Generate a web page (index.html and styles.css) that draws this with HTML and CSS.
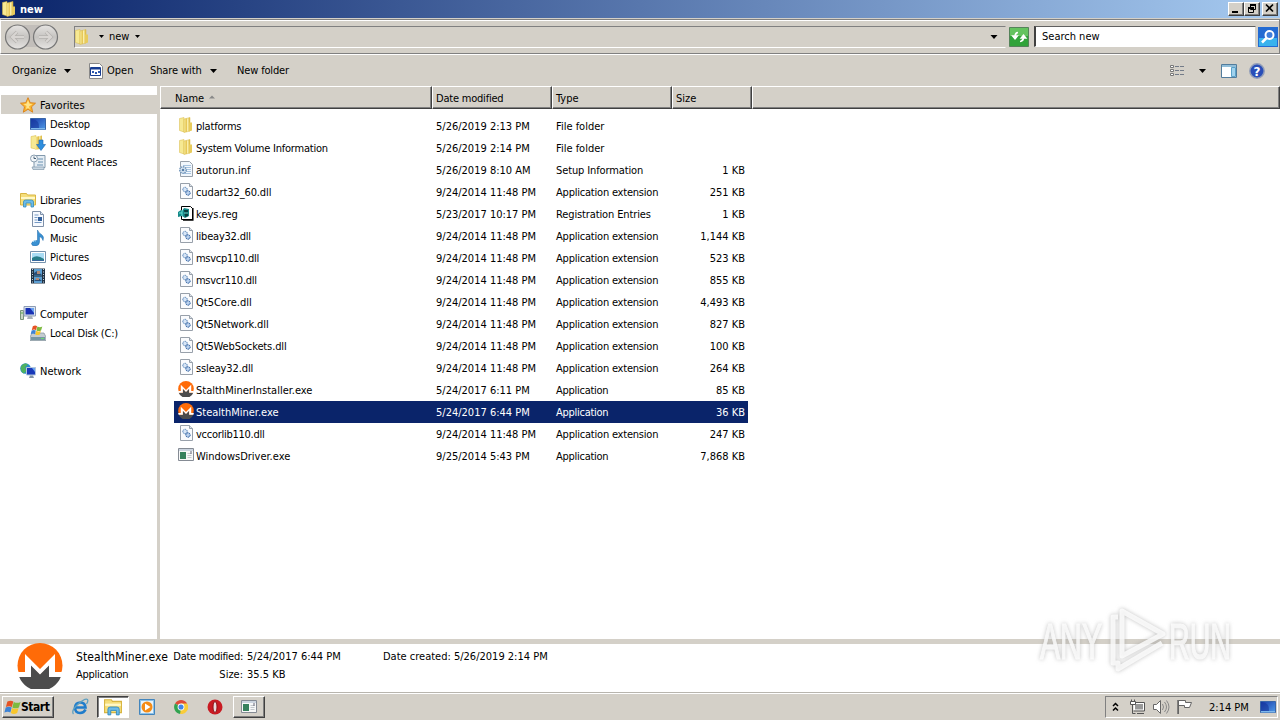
FILE: index.html
```html
<!DOCTYPE html>
<html lang="en">
<head>
<meta charset="utf-8">
<title>new</title>
<link rel="stylesheet" href="styles.css">
</head>
<body>
<svg class="defs" width="0" height="0">
<defs>
<linearGradient id="gold" x1="0" x2="1"><stop offset="0" stop-color="#f9eea0"/><stop offset=".5" stop-color="#e3c04a"/><stop offset=".55" stop-color="#fbf3b4"/><stop offset="1" stop-color="#dcb63c"/></linearGradient>
<linearGradient id="blue" x1="0" y1="0" x2="1" y2="1"><stop offset="0" stop-color="#1838a8"/><stop offset="1" stop-color="#4f9be8"/></linearGradient>
<linearGradient id="silver" x1="0" y1="0" x2="0" y2="1"><stop offset="0" stop-color="#e6e4e2"/><stop offset=".5" stop-color="#c6c4c1"/><stop offset="1" stop-color="#e6e4e2"/></linearGradient>
<symbol id="folder" viewBox="0 0 16 16"><path d="M1.500 1.500 6 .5V15l-4.500-1.500z" fill="#f6e993" stroke="#d9b844" stroke-width=".5"/><path d="M6 2l6-1.500V14l-6 1.500z" fill="url(#gold)" stroke="#d9b844" stroke-width=".5"/><path d="M11 5.500h3v8l-3 1z" fill="#e8cb5c"/></symbol>
<symbol id="dll" viewBox="0 0 16 16"><path d="M2.500.5h9l3 3v12h-12z" fill="#fafbfd" stroke="#98a0aa"/><path d="M11.500.5v3h3" fill="#dde3ea" stroke="#98a0aa"/><circle cx="7" cy="6.500" r="2.200" fill="#d7e5f6" stroke="#4677b0" stroke-dasharray="1.200 .6"/><circle cx="10" cy="10" r="2.200" fill="#b9d0ed" stroke="#23569a" stroke-dasharray="1.500 .5"/></symbol>
<symbol id="inf" viewBox="0 0 16 16"><path d="M2.500.5h9l3 3v12h-12z" fill="#f2f7fc" stroke="#98a0aa"/><path d="M5 4.500h8M6 6.500h7M8 8.500h5M8 10.500h5M5 12.500h8" stroke="#a8c4e0"/><circle cx="5" cy="9" r="3.200" fill="#dce8f4" stroke="#6e93b9" stroke-width="1.500" stroke-dasharray="1.400 .7"/><circle cx="5" cy="9" r="1.300" fill="#597fa8"/></symbol>
<symbol id="reg" viewBox="0 0 16 16"><path d="M3.500 1.500h9l2 2v11h-11z" fill="#fff" stroke="#000"/><path d="M14.800 3v12H5" fill="none" stroke="#000" stroke-width="1.500"/><path d="M0 7l3-2 1 1 2-3 5 1v7l-4 2-3-2-4 1z" fill="#168989"/><path d="M6 5l4 0v6l-3 1z" fill="#063c3e"/><path d="M1 8h3M6 8h4M4 5v6" stroke="#66dfd4"/></symbol>
<symbol id="monero" viewBox="0 0 46 46"><circle cx="23" cy="22.500" r="22.500" fill="#ff6b08"/><path d="M2 33.500h12V22l9 9 9-9v11.500h12A22.500 22.500 0 0 1 2 33.500z" fill="#4c4c4c"/><path d="M1.500 34h12.500V22.500L23 31.500l9-9V34h12.500l1-5H38V11L23 26 8 11v18H.5z" fill="#fff"/></symbol>
<symbol id="app" viewBox="0 0 16 16"><path d="M.5 1.500h15v12H.5z" fill="#f7f8f8" stroke="#858b94"/><path d="M1 2h14v2H1z" fill="#cbd4df"/><path d="M2 5h6v7H2z" fill="#36815d"/><path d="M9.500 6.500h4M9.500 8.500h4M9.500 10.500h4" stroke="#c3c8cc"/><path d="M13 4v3" stroke="#667"/></symbol>
<symbol id="star" viewBox="0 0 16 16"><path d="M8 .7l2.200 5 5.300.5-4 3.600 1.200 5.400L8 12.300l-4.700 2.900 1.200-5.400-4-3.600 5.300-.5z" fill="#fbb62f" stroke="#d97f16" stroke-width=".9"/><path d="M8 3l1.500 3.700 3 .3-3.500 2.500 1 3L8 11l-2 1 .5-3-3-2 3-.3z" fill="#ffe38a"/></symbol>
<symbol id="desk" viewBox="0 0 16 16"><path d="M.5 2.500h15v11H.5z" fill="url(#blue)" stroke="#3865a8"/><path d="M1 12h14v1.500H1z" fill="#7eb8ec"/><path d="M2 3q8 1 7 9H1V3z" fill="#16359b" opacity=".6"/></symbol>
<symbol id="down" viewBox="0 0 16 16"><path d="M1 1.500 6 .5V14l-5-1z" fill="#f6e993" stroke="#d9b844" stroke-width=".5"/><path d="M5 2l7-1.500v13l-7 1.500z" fill="url(#gold)"/><path d="M9 5h4v4.500h2.500L11 15.500 6.500 9.500H9z" fill="#2e8ede" stroke="#1b67af" stroke-width=".6"/></symbol>
<symbol id="recent" viewBox="0 0 16 16"><path d="M4 1.500h11v12H4z" fill="#e5edf4" stroke="#8299ac"/><path d="M2 13h12v2.500H3z" fill="#c9d7e2" stroke="#8299ac" stroke-width=".7"/><path d="M8 5h5M8 8h5M7 11h6" stroke="#6990b0"/><circle cx="4" cy="4.500" r="3.500" fill="#f3f7fa" stroke="#8ca0b1"/><path d="M4 2.500v2h2" fill="none" stroke="#445d73"/></symbol>
<symbol id="lib" viewBox="0 0 16 16"><path d="M.5 1.500h6l1 1.500h8v10H.5z" fill="#f5de7b" stroke="#d8b542"/><path d="M1 5h14v2H1z" fill="#fff8c7"/><path d="M3.500 15v-5q0-2 2-2h6q2 0 2 2v5h-2.500v-4h-5v4z" fill="#6cbbe8" stroke="#328abd" stroke-width=".8"/></symbol>
<symbol id="doc" viewBox="0 0 16 16"><path d="M2.500.5h8l3 3v12h-11z" fill="#f7faff" stroke="#7f90a8"/><path d="M10.500.5v3h3" fill="#dce8f5" stroke="#7f90a8"/><path d="M4.500 4h4M4.500 6.500h3M4.500 9h3M4.500 11.500h7" stroke="#769ac5"/><path d="M8 6h4v4H8z" fill="#315f9c"/></symbol>
<symbol id="music" viewBox="0 0 16 16"><path d="M7.500 0q1 3 4 4.500 3 2 1.500 6-.5-3-3.500-4v5.500q0 3.500-4 4-4 0-4-2.500 1-3.500 6-3z" fill="#3a91d2" stroke="#1b67aa" stroke-width=".5"/><path d="M3 12q1-2 3-1" stroke="#a6dcf7" fill="none"/></symbol>
<symbol id="pic" viewBox="0 0 16 16"><path d="M.5 2.500h15v11H.5z" fill="#fff" stroke="#7692ad"/><path d="M2 4h12v8H2z" fill="#a9dcf4"/><path d="M2 9q5-4 12 1v2H2z" fill="#287e8a"/><path d="M2 11h12v1H2z" fill="#38689e"/></symbol>
<symbol id="vid" viewBox="0 0 16 16"><path d="M1 .5h14v15H1z" fill="#213244"/><path d="M4 1h8v14H4z" fill="#5c9ed1"/><path d="M4 5l3-2 5 4H4zM4 13l4-3 4 3z" fill="#294d77"/><path d="M7 3h3v3H7zM6 10h3v2H6z" fill="#b08a78"/><path d="M4 8h8" stroke="#182c3e"/><path d="M2.500 1v14M13.500 1v14" stroke="#c9d7e2" stroke-dasharray="1 1.500"/></symbol>
<symbol id="comp" viewBox="0 0 16 16"><path d="M.5 4.500h3v9h-3z" fill="#cad7c7" stroke="#78947b"/><path d="M1 7h2" stroke="#57b04a"/><path d="M4 .5h11.500V10H4z" fill="#dce5f1" stroke="#8c9bb3"/><path d="M5.500 2h8.500v6.500H5.500z" fill="#1730b4"/><path d="M10 2h4v5z" fill="#6ba1ef"/><path d="M8 10h4l1 3H7z" fill="#a7b0bb"/></symbol>
<symbol id="flag4" viewBox="0 0 20 18"><path d="M4 2q4-2 7 0L9.200 8.500q-3-2-7 0z" fill="#e55324"/><path d="M11.500 2.500q4 2 8 0L17.500 9q-4 2-7.700 0z" fill="#7dba3f"/><path d="M2 9q4-2 7 0L7.500 15q-3-2-7 0z" fill="#3d83d5"/><path d="M9.600 9.500q4 2 7.500 0L15.500 15.500q-4 2-7.500 0z" fill="#f8c62c"/></symbol>
<symbol id="disk" viewBox="0 0 16 16"><path d="M2 8h12l2 4v3.500H0V12z" fill="#c4ccd1" stroke="#7f919b" stroke-width=".7"/><path d="M1 12h14v3H1z" fill="#7796a3"/><path d="M11 13.500h3" stroke="#69dc71"/><use href="#flag4" x="0" y="0" width="13" height="11"/></symbol>
<symbol id="net" viewBox="0 0 16 16"><circle cx="5.500" cy="5.500" r="5.300" fill="#278acc"/><path d="M1 3.500q3-5 7-2L5 4.500l2 3-3 3Q0 8.500 1 3.500z" fill="#4eb260"/><path d="M6.500 4.500h9v7.500h-9z" fill="#1939b9" stroke="#b3c6dd"/><path d="M12 5h3v4z" fill="#6ba5f0"/><path d="M10 12.500h3l1 2.500H9z" fill="#8495a7"/></symbol>
<symbol id="chev" viewBox="0 0 7 4"><path d="M0 0h7L3.500 4z"/></symbol>
</defs>
</svg>

<div class="window">
<header class="titlebar">
<svg class="i16"><use href="#folder"/></svg><b class="title">new</b>
<div class="caption-buttons">
<span class="cap"><svg width="12" height="10"><path d="M2 8h6v2H2z"/></svg></span>
<span class="cap"><svg width="12" height="11"><path d="M4.500 2.500h5v4h-5zM2.500 5.500h5v4h-5z" fill="#d4d0c8" stroke="#000"/><path d="M4 1h6v2H4zM2 4h6v2H2z"/></svg></span>
<span class="cap close"><svg width="12" height="10"><path d="M2 1.500l7 7M9 1.500l-7 7" stroke="#000" stroke-width="1.700"/></svg></span>
</div>
</header>

<nav class="navbar">
<svg class="arrows" width="60" height="30" viewBox="0 0 60 30"><path d="M10 3h38v22H10z" fill="#c2beba"/><circle cx="14.500" cy="15" r="12" fill="url(#silver)" stroke="#777" stroke-width="1.200"/><circle cx="42.500" cy="15" r="12" fill="url(#silver)" stroke="#777" stroke-width="1.200"/><path d="M21 15H9m5-5-5 5 5 5M36 15h12m-5-5 5 5-5 5" stroke="#b4b1ae" stroke-width="3.500" fill="none"/><path d="M21 15H9m5-5-5 5 5 5M36 15h12m-5-5 5 5-5 5" stroke="#d8d5d2" stroke-width="2.200" fill="none"/></svg>
<div class="address"><svg class="i16"><use href="#folder"/></svg><svg class="ch5"><use href="#chev"/></svg><span class="crumb">new</span><svg class="ch5"><use href="#chev"/></svg><svg class="ch8 push"><use href="#chev"/></svg></div>
<svg class="go" width="20" height="20"><path d="M.5.500h19v19H.500z" fill="#31a33a" stroke="#55835a"/><path d="M1 1h18v8H1z" fill="#64c35f"/><path d="M9 5.500q-3 0-3 4M3.500 9h5L6 12zM11 14.500q3.500 0 3.500-4M12 11h5l-2.500-3z" fill="#fff" stroke="#fff" stroke-width="1.300"/></svg>
<div class="search">Search new</div>
<svg class="find" width="20" height="20"><path d="M0 0h20v20H0z" fill="#236bd2"/><path d="M1 11h18v8H1z" fill="#39b2ed"/><circle cx="11.500" cy="8" r="4" fill="#3f7edb" stroke="#fff" stroke-width="2"/><path d="M8.500 11 4 15.500" stroke="#fff" stroke-width="2.500"/></svg>
</nav>

<div class="toolbar">
<span class="organize">Organize</span><svg class="ch7 g1"><use href="#chev"/></svg>
<svg class="i16 openico" viewBox="0 0 16 16"><path d="M1.500.5h10l3 3v12h-13z" fill="#fff" stroke="#888"/><path d="M2.500 4.500h10v8h-10z" fill="#fff" stroke="#173d92"/><path d="M3 5h9v1.500H3z" fill="#173d92"/><path d="M4 8h2v2H4zM7 9h2v2H7zM10 8h2v2h-2z" fill="#2d58b0"/></svg><span class="open">Open</span>
<span class="share">Share with</span><svg class="ch7 g2"><use href="#chev"/></svg><span class="newf">New folder</span>
<svg class="views" width="16" height="14"><path d="M.5 1.500h3v2h-3zM.5 5.500h3v2h-3zM.5 9.500h3v2h-3z" fill="#fff" stroke="#777"/><path d="M5 2.500h10M5 6.500h10M5 10.500h10" stroke="#737b88" stroke-dasharray="4 1"/></svg>
<svg class="ch7 g3"><use href="#chev"/></svg>
<svg class="pane" width="16" height="14"><path d="M.5.500h15v13H.500z" fill="#fff" stroke="#527c9c"/><path d="M1 1h14v2H1z" fill="#91bed9"/><path d="M10.500 3.500h4v9h-4z" fill="#a0d2ee" stroke="#5aa1c8"/></svg>
<svg class="help" width="16" height="16"><circle cx="8" cy="8" r="7.200" fill="#294eb8" stroke="#929eb9" stroke-width="1.500"/><text x="8" y="12.500" text-anchor="middle" class="qmark">?</text></svg>
</div>

<main class="body">
<aside class="sidebar">
<div class="node root selected"><svg class="i16"><use href="#star"/></svg><span>Favorites</span></div>
<div class="node"><svg class="i16"><use href="#desk"/></svg><span class="t1">Desktop</span></div>
<div class="node"><svg class="i16"><use href="#down"/></svg><span class="t2">Downloads</span></div>
<div class="node"><svg class="i16"><use href="#recent"/></svg><span class="t1">Recent Places</span></div>
<div class="node root gap"><svg class="i16"><use href="#lib"/></svg><span class="t2">Libraries</span></div>
<div class="node"><svg class="i16"><use href="#doc"/></svg><span class="t2">Documents</span></div>
<div class="node"><svg class="i16"><use href="#music"/></svg><span class="t2">Music</span></div>
<div class="node"><svg class="i16"><use href="#pic"/></svg><span>Pictures</span></div>
<div class="node"><svg class="i16"><use href="#vid"/></svg><span class="t2">Videos</span></div>
<div class="node root gap"><svg class="i16"><use href="#comp"/></svg><span class="t2">Computer</span></div>
<div class="node"><svg class="i16"><use href="#disk"/></svg><span class="t2">Local Disk (C:)</span></div>
<div class="node root gap"><svg class="i16"><use href="#net"/></svg><span>Network</span></div>
</aside>
<section class="files">
<div class="columns"><div class="col first">Name<svg class="sort" width="6" height="4"><path d="M0 3.500h6L3 .5z" fill="#888"/></svg></div><div class="col"><span class="t2">Date modified</span></div><div class="col">Type</div><div class="col">Size</div><div class="col"></div></div>
<div class="rows">
<div class="row"><svg class="i16"><use href="#folder"/></svg><span class="t2">platforms</span><span>5/26/2019 2:13 PM</span><span>File folder</span><span></span></div>
<div class="row"><svg class="i16"><use href="#folder"/></svg><span class="t2">System Volume Information</span><span>5/26/2019 2:14 PM</span><span>File folder</span><span></span></div>
<div class="row"><svg class="i16"><use href="#inf"/></svg><span>autorun.inf</span><span>5/26/2019 8:10 AM</span><span class="t1">Setup Information</span><span>1 KB</span></div>
<div class="row"><svg class="i16"><use href="#dll"/></svg><span class="t1">cudart32_60.dll</span><span>9/24/2014 11:48 PM</span><span class="t2">Application extension</span><span>251 KB</span></div>
<div class="row"><svg class="i16"><use href="#reg"/></svg><span>keys.reg</span><span>5/23/2017 10:17 PM</span><span class="t1">Registration Entries</span><span>1 KB</span></div>
<div class="row"><svg class="i16"><use href="#dll"/></svg><span class="t2">libeay32.dll</span><span>9/24/2014 11:48 PM</span><span class="t2">Application extension</span><span>1,144 KB</span></div>
<div class="row"><svg class="i16"><use href="#dll"/></svg><span class="t3">msvcp110.dll</span><span>9/24/2014 11:48 PM</span><span class="t2">Application extension</span><span>523 KB</span></div>
<div class="row"><svg class="i16"><use href="#dll"/></svg><span class="t3">msvcr110.dll</span><span>9/24/2014 11:48 PM</span><span class="t2">Application extension</span><span>855 KB</span></div>
<div class="row"><svg class="i16"><use href="#dll"/></svg><span>Qt5Core.dll</span><span>9/24/2014 11:48 PM</span><span class="t2">Application extension</span><span>4,493 KB</span></div>
<div class="row"><svg class="i16"><use href="#dll"/></svg><span class="t1">Qt5Network.dll</span><span>9/24/2014 11:48 PM</span><span class="t2">Application extension</span><span>827 KB</span></div>
<div class="row"><svg class="i16"><use href="#dll"/></svg><span class="t1">Qt5WebSockets.dll</span><span>9/24/2014 11:48 PM</span><span class="t2">Application extension</span><span>100 KB</span></div>
<div class="row"><svg class="i16"><use href="#dll"/></svg><span class="t1">ssleay32.dll</span><span>9/24/2014 11:48 PM</span><span class="t2">Application extension</span><span>264 KB</span></div>
<div class="row"><svg class="i16"><use href="#monero"/></svg><span>StalthMinerInstaller.exe</span><span>5/24/2017 6:11 PM</span><span class="t3">Application</span><span>85 KB</span></div>
<div class="row selected-row"><svg class="i16"><use href="#monero"/></svg><span>StealthMiner.exe</span><span>5/24/2017 6:44 PM</span><span class="t3">Application</span><span>36 KB</span></div>
<div class="row"><svg class="i16"><use href="#dll"/></svg><span class="t3">vccorlib110.dll</span><span>9/24/2014 11:48 PM</span><span class="t2">Application extension</span><span>247 KB</span></div>
<div class="row"><svg class="i16"><use href="#app"/></svg><span>WindowsDriver.exe</span><span>9/25/2014 5:43 PM</span><span class="t3">Application</span><span>7,868 KB</span></div>
</div>
</section>
</main>

<footer class="details">
<svg class="bigicon"><use href="#monero"/></svg>
<div class="dname"><span class="dtitle">StealthMiner.exe</span><span class="t3">Application</span></div>
<div class="dlabels"><span class="t3">Date modified:</span><span>Size:</span></div>
<div class="dvalues"><span>5/24/2017 6:44 PM</span><span>35.5 KB</span></div>
<div class="dcreated"><span>Date created: 5/26/2019 2:14 PM</span></div>
</footer>

<div class="taskbar">
<div class="start"><svg width="17" height="17"><use href="#flag4"/></svg><b>Start</b></div>
<div class="quick ie"><svg width="18" height="18" viewBox="0 0 18 18"><path d="M14.500 11.500Q13 15 9 15q-5 0-5-5.500Q4.500 4.500 9.500 4.500q4.500 0 5 5H4.500" fill="none" stroke="#1f7ccb" stroke-width="2.600"/><path d="M2.500 16Q0 13 6 7q8-7 10.500-5.500Q17.500 3 15.500 6" fill="none" stroke="#5d9fc0" stroke-width="1.300"/></svg></div>
<div class="task active"><svg width="18" height="18"><use href="#lib"/></svg></div>
<div class="quick wmp"><svg width="16" height="16"><path d="M.5.500h15v15H.500z" fill="#8dc2e9" stroke="#4385bc"/><path d="M2 2h12v12H2z" fill="#e9f4fb"/><circle cx="8" cy="8" r="5.500" fill="#f58c16"/><path d="M6 4.500v7L11.500 8z" fill="#fff"/></svg></div>
<div class="quick chrome"><svg width="14" height="14" viewBox="0 0 16 16"><path d="M8 8 1.200 4A8 8 0 0 1 15 4z" fill="#df4a38"/><path d="M8 8 1.200 4A8 8 0 0 0 7 16l4-6z" fill="#32a350"/><path d="M8 8l-1 8A8 8 0 0 0 15 4H8z" fill="#f9cc39"/><circle cx="8" cy="8" r="3.900" fill="#fff"/><circle cx="8" cy="8" r="2.900" fill="#4285e8"/></svg></div>
<div class="quick opera"><svg width="16" height="16"><circle cx="8" cy="8" r="7.500" fill="#c91b22"/><ellipse cx="8" cy="8" rx="2" ry="5.500" fill="#e9dada" stroke="#8d1116"/></svg></div>
<div class="task appwin"><svg class="i16"><use href="#app"/></svg></div>
<div class="tray">
<svg class="hide" width="8" height="10"><path d="M1 4l2.500-2.500L6 4M1 8.500 3.500 6 6 8.500" fill="none" stroke="#000" stroke-width="1.500"/></svg>
<svg class="lan" width="17" height="16"><path d="M4.500 3.500h11v8h-11z" fill="#fff"/><path d="M6 5h8v5.500H6z" fill="#999"/><path d="M5 3.500h10.500v8.500H4.500M8 14.500h7M3.500 5v9.500h3" fill="none" stroke="#555"/><path d="M1.500 2.500h5v3h-5zM2.500.5v2M5.500.5v2" fill="#fff" stroke="#555"/></svg>
<svg class="vol" width="18" height="16"><path d="M1.500 5.500h3l4-4v13l-4-4h-3z" fill="#fff" stroke="#666"/><path d="M10.500 5q2 3 0 6M12.500 3q4 5 0 10M14.500 1.500q5 6.500 0 13" stroke="#888" fill="none"/></svg>
<svg class="flag" width="17" height="16"><path d="M2.500 15V1.500h7v2h6l-2 5h-5v-2h-6" fill="#fff" stroke="#666"/><path d="M2 1v14" stroke="#666" stroke-width="1.500"/></svg>
<span class="clock">2:14 PM</span>
<svg class="i16 show"><use href="#desk"/></svg>
</div>
</div>

<svg class="watermark" width="240" height="80" viewBox="0 0 240 80">
<g class="mark"><text x="5" y="55" textLength="62" lengthAdjust="spacingAndGlyphs">ANY</text><text x="134" y="55" textLength="62" lengthAdjust="spacingAndGlyphs">RUN</text></g>
<g class="markline"><path d="M87 7v45l41-22z"/><path d="M83 13h-5v46h5v6l44-26"/></g>
</svg>
</div>
</body>
</html>
```
FILE: styles.css
```css
* { box-sizing: border-box; }
body { margin: 0; font: 11px/14px "DejaVu Sans Condensed", "DejaVu Sans", sans-serif; font-stretch: condensed; color: #000; }
svg { display: block; flex: none; }
.defs { position: absolute; }
.i16 { width: 16px; height: 16px; }
.t1 { letter-spacing: -.12px; }
.t2 { letter-spacing: -.21px; }
.t3 { letter-spacing: -.27px; }
.window { position: relative; width: 1280px; height: 720px; overflow: hidden; display: flex; flex-direction: column; background: #d4d0c8; white-space: nowrap; }
.titlebar { height: 18px; flex: none; display: flex; align-items: center; padding: 0 2px 0 1px; background: linear-gradient(90deg, #0a246a, #a6caf0); color: #fff; }
.title { margin-left: 3px; padding-top: 1px; font-size: 11px; }
.caption-buttons { display: flex; margin-left: auto; }
.cap { width: 16px; height: 14px; background: #d4d0c8; border: 1px solid; border-color: #fff #404040 #404040 #fff; box-shadow: inset -1px -1px #808080; padding-left: 1px; }
.close { margin-left: 2px; }
.navbar { height: 35px; flex: none; display: flex; align-items: center; border: 1px solid #808080; border-left-color: #fff; box-shadow: inset 0 1px #fff; margin-top: 1px; padding: 0 1px 0 2px; }
.arrows { width: 60px; }
.address { width: 932px; height: 22px; margin-left: 11px; display: flex; align-items: center; border: 1px solid; border-color: #808080 #d4d0c8 #fff #808080; }
.address > .i16 { margin-left: -1px; }
.ch5 { width: 5px; height: 3px; margin-left: 9px; }
.ch7 { width: 7px; height: 4px; }
.ch8 { width: 8px; height: 4px; }
.crumb { margin-left: 5px; }
.crumb + .ch5 { margin-left: 6px; }
.push { margin-left: auto; margin-right: 7px; }
.go { margin-left: 3px; }
.search { margin-left: 5px; width: 222px; height: 21px; background: #fff; border: 1px solid; border-color: #606060 #d4d0c8 #fff #404040; border-left-width: 2px; padding: 3px 6px; }
.find { margin-left: 2px; }
.toolbar { height: 32px; flex: none; display: flex; align-items: center; padding-left: 12px; border-top: 1px solid #fff; }
.organize { width: 52px; }
.openico { margin-left: 17px; }
.open { margin-left: 3px; width: 43px; }
.share { width: 60px; letter-spacing: -.1px; }
.newf { margin-left: 20px; letter-spacing: -.15px; }
.views { margin-left: auto; }
.g3 { margin: 0 15px 0 13px; }
.help { margin: 0 15px 0 12px; }
.qmark { font: bold 12px "DejaVu Sans", sans-serif; fill: #fff; }
.body { height: 553px; flex: none; display: flex; background: #fff; }
.sidebar { width: 160px; padding: 9px 0 0 1px; border-right: 3px solid #d4d0c8; }
.node { height: 19px; display: flex; align-items: center; padding-left: 29px; }
.node span { margin-left: 4px; padding-top: 2px; }
.root { padding-left: 19px; }
.selected { background: #d4d0c8; }
.gap { margin-top: 19px; }
.files { flex: 1; }
.columns { height: 23px; display: grid; grid-template-columns: 272px 120px 120px 80px 1fr; background: #d4d0c8; }
.col { display: flex; align-items: center; padding: 2px 0 0 3px; border: 1px solid; border-color: #fff #404040 #404040 #fff; box-shadow: inset -1px -1px #808080; }
.first { padding-left: 14px; }
.sort { margin-left: 5px; margin-top: -3px; }
.rows { padding: 6px 0 0 14px; }
.row { width: 574px; height: 22px; display: grid; grid-template-columns: 16px 242px 120px 120px 1fr; align-items: center; padding: 0 3px 0 4px; }
.row > svg { margin-top: -2px; }
.row span { padding-top: 2px; }
.row span:nth-of-type(1) { padding-left: 2px; }
.row span:nth-of-type(4) { text-align: right; }
.selected-row { background: #0a246a; color: #fff; }
.details { height: 54px; flex: none; background: #fff; border-top: 5px solid #d4d0c8; border-bottom: 1px solid #b8b5ae; display: flex; align-items: flex-start; }
.details span { display: block; height: 18px; line-height: 14px; }
.details div { padding-top: 6px; }
.bigicon { width: 46px; height: 46px; margin: -1px 12px 0 17px; }
.dname { width: 97px; margin-left: 1px; }
.dname .dtitle { font-size: 12px; letter-spacing: .12px; }
.dlabels { width: 70px; text-align: right; }
.dvalues { margin-left: 4px; width: 136px; }
.taskbar { height: 27px; flex: none; display: flex; align-items: center; border-top: 1px solid #fff; }
.start, .task { border: 1px solid; border-color: #fff #404040 #404040 #fff; box-shadow: inset -1px -1px #808080; height: 22px; display: flex; align-items: center; }
.start { margin-left: 2px; width: 52px; padding-left: 1px; font-size: 12px; }
.start b { letter-spacing: -.45px; }
.ie { margin-left: 17px; }
.task { width: 32px; justify-content: center; }
.active { margin-left: 8px; background: #fff; border-color: #404040 #fff #fff #404040; box-shadow: inset 1px 1px #808080; }
.wmp { margin-left: 10px; }
.chrome { margin-left: 19px; }
.opera { margin-left: 19px; }
.appwin { margin-left: 10px; }
.tray { margin-left: auto; margin-right: 2px; width: 173px; height: 22px; display: flex; align-items: center; border: 1px solid; border-color: #808080 #fff #fff #808080; }
.hide { margin-left: 6px; }
.lan { margin-left: 9px; }
.vol { margin-left: 6px; }
.flag { margin-left: 6px; }
.clock { margin-left: 16px; width: 51px; padding-top: 1px; }
.watermark { position: absolute; left: 1035px; top: 604px; filter: drop-shadow(0 0 2px #999b); }
.mark text { font: 50px "Liberation Sans", sans-serif; fill: #fff; stroke: #fff; stroke-width: 1.2; opacity: .8; }
.markline path { fill: none; stroke: #fff; stroke-width: 5; stroke-linejoin: round; opacity: .8; }
```
